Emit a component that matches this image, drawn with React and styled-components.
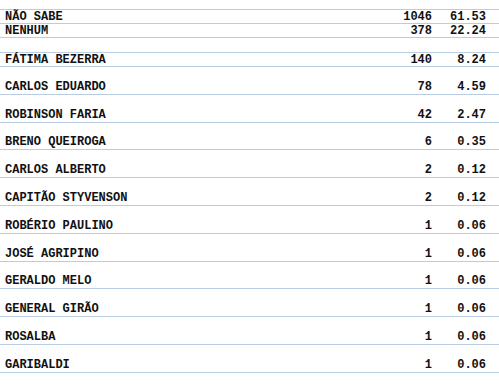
import React from 'react';
import styled, { createGlobalStyle } from 'styled-components';

const GlobalStyle = createGlobalStyle`
  html, body {
    margin: 0;
    padding: 0;
    background: #ffffff;
  }
  body {
    padding-top: 9px;
    font-family: "Courier New", "Liberation Mono", monospace;
  }
`;

const rows = [
  { name: 'NÃO SABE', count: '1046', pct: '61.53', size: 'short' },
  { name: 'NENHUM', count: '378', pct: '22.24', size: 'short' },
  { name: '', count: '', pct: '', size: 'blank' },
  { name: 'FÁTIMA BEZERRA', count: '140', pct: '8.24', size: 'short' },
  { name: 'CARLOS EDUARDO', count: '78', pct: '4.59', size: 'tall' },
  { name: 'ROBINSON FARIA', count: '42', pct: '2.47', size: 'tall' },
  { name: 'BRENO QUEIROGA', count: '6', pct: '0.35', size: 'tall' },
  { name: 'CARLOS ALBERTO', count: '2', pct: '0.12', size: 'tall' },
  { name: 'CAPITÃO STYVENSON', count: '2', pct: '0.12', size: 'tall' },
  { name: 'ROBÉRIO PAULINO', count: '1', pct: '0.06', size: 'tall' },
  { name: 'JOSÉ AGRIPINO', count: '1', pct: '0.06', size: 'tall' },
  { name: 'GERALDO MELO', count: '1', pct: '0.06', size: 'tall' },
  { name: 'GENERAL GIRÃO', count: '1', pct: '0.06', size: 'tall' },
  { name: 'ROSALBA', count: '1', pct: '0.06', size: 'tall' },
  { name: 'GARIBALDI', count: '1', pct: '0.06', size: 'tall' },
];

// total height (without the border) and the space above the text
const sizes = {
  short: { height: 13, top: 1 },
  blank: { height: 14, top: 0 },
  tall: { height: 26.8, top: 13.8 },
};

const Table = styled.div`
  display: flex;
  flex-direction: column;
  border-top: 1px solid #b8cce4;
`;

const Row = styled.div`
  box-sizing: border-box;
  display: grid;
  grid-template-columns: 1fr 54px 54px;
  align-items: start;
  height: ${(p) => sizes[p.$size].height + 1}px;
  padding: ${(p) => sizes[p.$size].top}px 13px 0 5px;
  border-bottom: 1px solid #b8cce4;
  font-size: 12px;
  font-weight: bold;
  line-height: 13px;
  color: #111111;
  white-space: pre;
`;

const Name = styled.span`
  text-align: left;
`;

const Num = styled.span`
  text-align: right;
`;

export default function App() {
  return (
    <>
      <GlobalStyle />
      <Table>
        {rows.map((r, i) => (
          <Row key={i} $size={r.size}>
            <Name>{r.name}</Name>
            <Num>{r.count}</Num>
            <Num>{r.pct}</Num>
          </Row>
        ))}
      </Table>
    </>
  );
}
